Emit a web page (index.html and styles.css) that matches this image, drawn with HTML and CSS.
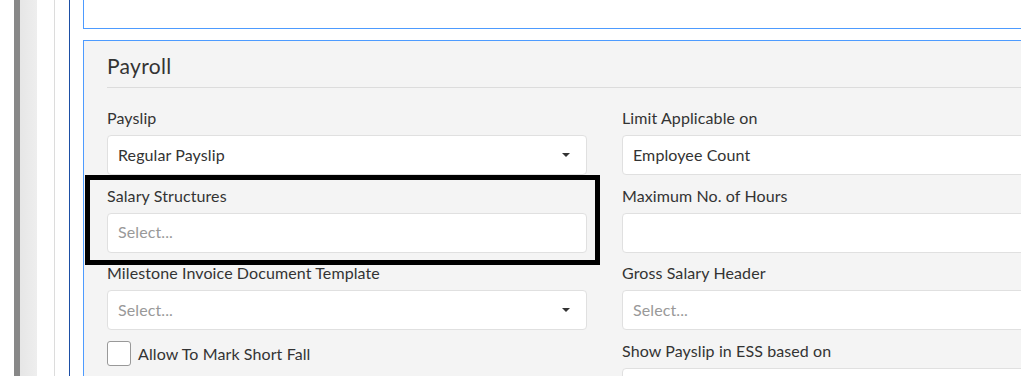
FILE: index.html
```html
<!DOCTYPE html>
<html>
<head>
<meta charset="utf-8">
<link rel="stylesheet" href="styles.css">
</head>
<body>
<div class="page">
  <div class="strip strip-white"></div>
  <div class="strip strip-dark"></div>
  <div class="strip strip-light"></div>
  <div class="strip strip-blank"></div>
  <div class="strip strip-line-gray"></div>
  <div class="strip strip-blank2"></div>
  <div class="strip strip-line-blue"></div>
  <div class="content">
    <div class="top-box"></div>
    <div class="panel">
      <div class="panel-title">Payroll</div>
      <div class="grid">
        <div class="col">
          <div class="group">
            <label class="label">Payslip</label>
            <div class="input select"><span class="value">Regular Payslip</span><span class="caret"></span></div>
          </div>
          <div class="group">
            <label class="label">Salary Structures</label>
            <div class="input"><span class="placeholder">Select...</span></div>
          </div>
          <div class="group">
            <label class="label">Milestone Invoice Document Template</label>
            <div class="input select"><span class="placeholder">Select...</span><span class="caret"></span></div>
          </div>
          <div class="check-row">
            <span class="checkbox"></span>
            <span class="check-label">Allow To Mark Short Fall</span>
          </div>
        </div>
        <div class="col">
          <div class="group">
            <label class="label">Limit Applicable on</label>
            <div class="input"><span class="value">Employee Count</span></div>
          </div>
          <div class="group">
            <label class="label">Maximum No. of Hours</label>
            <div class="input"></div>
          </div>
          <div class="group">
            <label class="label">Gross Salary Header</label>
            <div class="input"><span class="placeholder">Select...</span></div>
          </div>
          <div class="group">
            <label class="label">Show Payslip in ESS based on</label>
            <div class="input"></div>
          </div>
        </div>
      </div>
    </div>
  </div>
  <div class="highlight"></div>
</div>
</body>
</html>
```

FILE: styles.css
```css
html, body {
  margin: 0;
  padding: 0;
  background: #fff;
}
body {
  font-family: "Lato", "Liberation Sans", sans-serif;
  color: #333;
}
.page {
  position: relative;
  display: flex;
  width: 1021px;
  height: 376px;
  overflow: hidden;
}
.strip { flex: none; height: 100%; }
.strip-white { width: 14px; background: #fff; }
.strip-dark { width: 6px; background: #888; }
.strip-light { width: 17px; background: linear-gradient(to right, #e6e6e6, #eeeeee); }
.strip-blank { width: 17px; background: #fff; }
.strip-line-gray { width: 1px; background: #dcdcdc; }
.strip-blank2 { width: 14px; background: #fff; }
.strip-line-blue { width: 1px; background: #1d4fa5; }
.content {
  flex: none;
  width: 1100px;
  padding-left: 13px;
}
.top-box {
  height: 28px;
  border: 1px solid #4d9bff;
  border-top: none;
  background: #fff;
  margin-bottom: 11px;
}
.panel {
  border: 1px solid #4d9bff;
  background: #f4f4f4;
  padding: 0 23px;
  height: 400px;
}
.panel-title {
  font-size: 21px;
  letter-spacing: 0.3px;
  line-height: 24px;
  padding-top: 13px;
  padding-bottom: 9px;
  border-bottom: 1px solid #dcdcdc;
  margin-bottom: 20px;
  color: #333;
}
.grid {
  display: grid;
  grid-template-columns: 480px 480px;
  column-gap: 35px;
}
.group {
  display: flex;
  flex-direction: column;
  margin-bottom: 10.5px;
}
.label {
  font-size: 16px;
  letter-spacing: 0.1px;
  line-height: 20px;
  margin-bottom: 7px;
  color: #333;
}
.input {
  position: relative;
  box-sizing: border-box;
  height: 40px;
  border: 1px solid #e0e0e0;
  border-radius: 4px;
  background: #fff;
  padding: 0 10px 2px;
  display: flex;
  align-items: center;
  font-size: 16px;
  letter-spacing: 0.1px;
}
.value { color: #333; }
.placeholder { color: #999; }
.caret {
  position: absolute;
  right: 16px;
  top: 17px;
  width: 0;
  height: 0;
  border-left: 4px solid transparent;
  border-right: 4px solid transparent;
  border-top: 4px solid #333;
}
.check-row {
  display: flex;
  align-items: center;
  gap: 7px;
  margin-top: 1px;
}
.checkbox {
  box-sizing: border-box;
  width: 24px;
  height: 25px;
  border: 1px solid #999;
  border-radius: 3px;
  background: #fff;
}
.check-label {
  font-size: 16px;
  letter-spacing: 0.1px;
  color: #333;
}
.highlight {
  position: absolute;
  left: 85px;
  top: 175px;
  width: 515px;
  height: 90px;
  box-sizing: border-box;
  border: 5px solid #000;
}
```
